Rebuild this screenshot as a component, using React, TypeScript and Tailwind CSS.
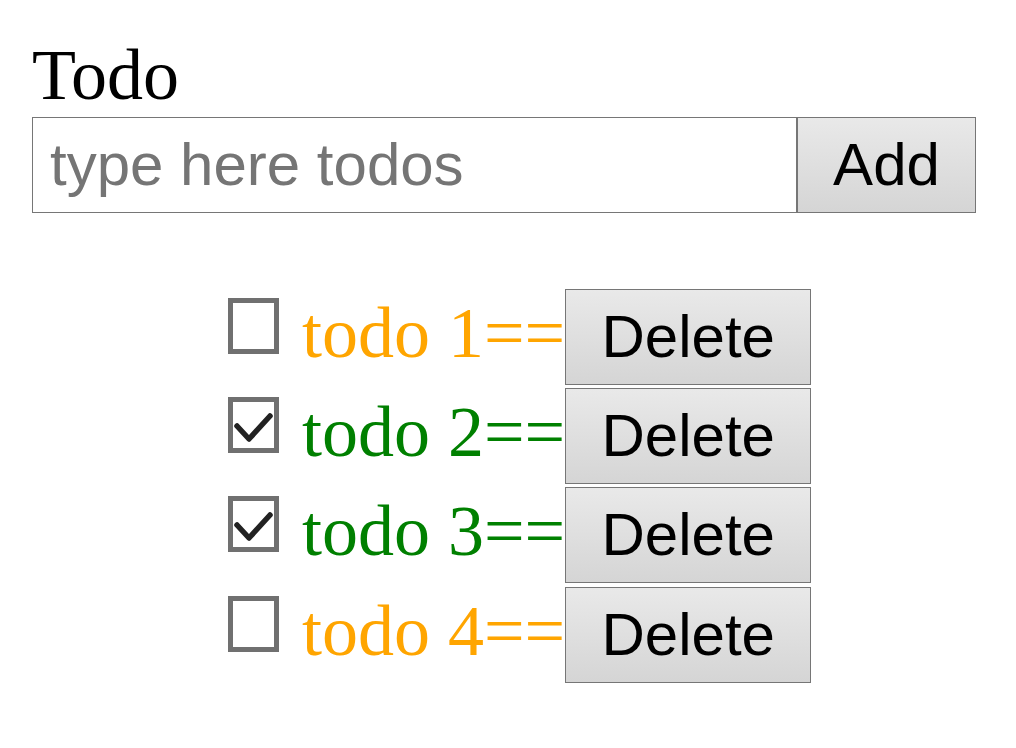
import React, { useState } from 'react';

interface Todo {
    id: number;
    title: string;
    done: boolean;
}

const Checkbox: React.FC<{ checked: boolean; onToggle: () => void }> = ({ checked, onToggle }) => (
    <svg
        width="51"
        height="56"
        viewBox="0 0 51 56"
        onClick={onToggle}
        className="self-start mt-[9px] shrink-0 cursor-pointer"
    >
        <rect x="2.5" y="2.5" width="46" height="51" fill="#fff" stroke="#707070" strokeWidth="5" />
        {checked && (
            <polyline
                points="9,29 21,42 42,19"
                fill="none"
                stroke="#222"
                strokeWidth="5.5"
                strokeLinecap="round"
                strokeLinejoin="round"
            />
        )}
    </svg>
);

export default function App() {
    const [todos, setTodos] = useState<Todo[]>([
        { id: 1, title: 'todo 1', done: false },
        { id: 2, title: 'todo 2', done: true },
        { id: 3, title: 'todo 3', done: true },
        { id: 4, title: 'todo 4', done: false },
    ]);
    const [text, setText] = useState('');

    const add = () => {
        if (!text.trim()) return;
        setTodos(t => [...t, { id: Date.now(), title: text, done: false }]);
        setText('');
    };

    return (
        <div className="min-h-screen bg-white pt-[34px] pl-[32px] font-['Liberation_Serif',serif] text-black">
            <div className="text-[72px] leading-[82.7px]">Todo</div>

            <div className="flex">
                <input
                    value={text}
                    onChange={e => setText(e.target.value)}
                    placeholder="type here todos"
                    className="w-[765px] h-[96px] border border-[#767676] pl-[17px] text-[60px] font-['Liberation_Sans',Arial,sans-serif] placeholder:text-[#757575] outline-none"
                />
                <button
                    onClick={add}
                    className="w-[179px] h-[96px] border border-[#767676] bg-gradient-to-b from-[#e9e9e9] to-[#d5d5d5] text-[60px] font-['Liberation_Sans',Arial,sans-serif] leading-none"
                >
                    Add
                </button>
            </div>

            <ul className="mt-[76px] ml-[196px] flex flex-col gap-[3.33px]">
                {todos.map(todo => (
                    <li key={todo.id} className="flex items-baseline">
                        <Checkbox
                            checked={todo.done}
                            onToggle={() =>
                                setTodos(t => t.map(x => (x.id === todo.id ? { ...x, done: !x.done } : x)))
                            }
                        />
                        <span
                            className={`ml-[23px] text-[72px] leading-none whitespace-pre ${
                                todo.done ? 'text-[#008000]' : 'text-[#ffa500]'
                            }`}
                        >
                            {todo.title}==
                        </span>
                        <button
                            onClick={() => setTodos(t => t.filter(x => x.id !== todo.id))}
                            className="w-[246px] h-[96px] border border-[#767676] bg-gradient-to-b from-[#e9e9e9] to-[#d5d5d5] text-[60px] font-['Liberation_Sans',Arial,sans-serif] leading-none"
                        >
                            Delete
                        </button>
                    </li>
                ))}
            </ul>
        </div>
    );
}
